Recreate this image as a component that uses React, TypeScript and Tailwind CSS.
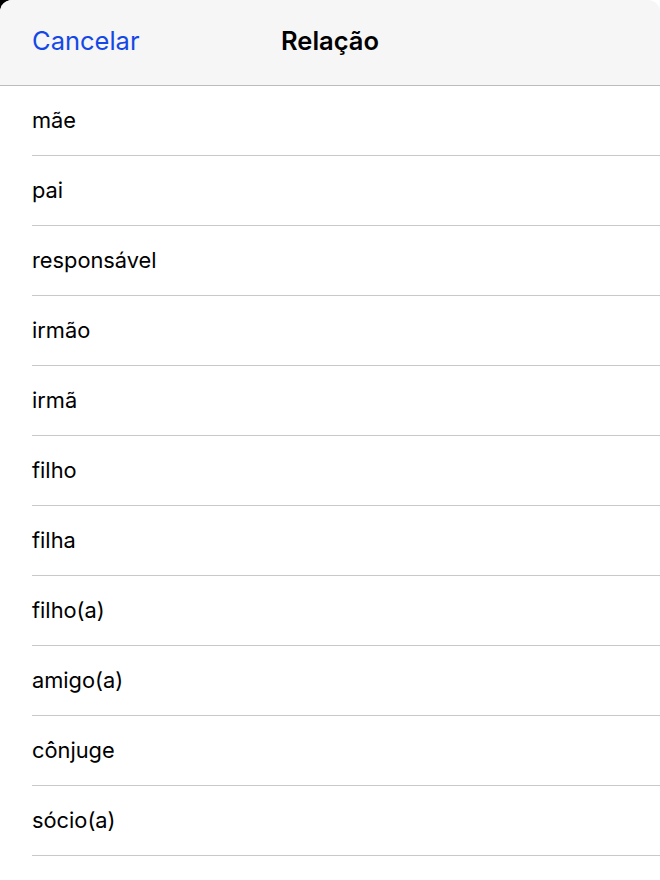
import React from "react";

const relations = [
  "mãe",
  "pai",
  "responsável",
  "irmão",
  "irmã",
  "filho",
  "filha",
  "filho(a)",
  "amigo(a)",
  "cônjuge",
  "sócio(a)",
];

const App: React.FC = () => {
  return (
    <div className="min-h-[880px] bg-[linear-gradient(to_right,#000_20px,#fff_20px)] font-['Inter',sans-serif] antialiased">
      <div className="min-h-[880px] bg-white rounded-t-[12px] overflow-hidden">
        <div className="h-[86px] bg-[#f6f6f6] border-b border-[#bcbcbc] grid grid-cols-3 items-center px-[32px] pb-[3px]">
          <button className="justify-self-start text-[25.5px] text-[#1448e6]">Cancelar</button>
          <h1 className="justify-self-center text-[25.5px] font-semibold text-black">Relação</h1>
          <div />
        </div>
        <ul className="pl-[32px]">
          {relations.map(r => (
            <li key={r} className="h-[70px] flex items-center border-b border-[#c9c9c9] text-[21.8px] text-black">
              {r}
            </li>
          ))}
        </ul>
      </div>
    </div>
  );
};

export default App;
